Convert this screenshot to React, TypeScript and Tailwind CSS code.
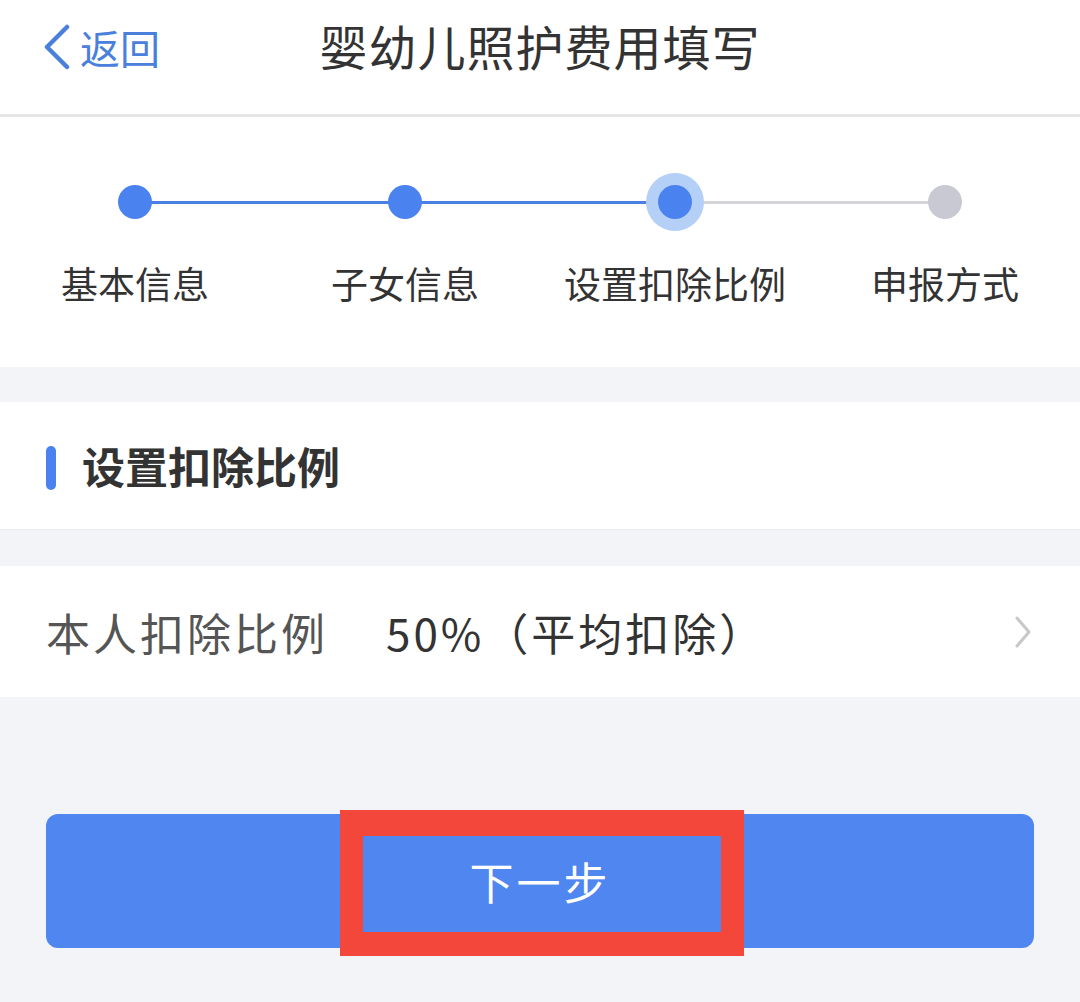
import React from 'react';

const steps = [
  { label: '基本信息', state: 'done' },
  { label: '子女信息', state: 'done' },
  { label: '设置扣除比例', state: 'active' },
  { label: '申报方式', state: 'todo' },
];

const App: React.FC = () => {
  return (
    <div
      className="w-[1080px] h-[1002px] bg-[#f3f4f8] overflow-hidden"
      style={{ fontFamily: '"Noto Sans CJK SC", "Noto Sans", sans-serif' }}
    >
      {/* Nav bar */}
      <div className="relative h-[117px] bg-white flex items-center justify-center pb-[20px] border-b-[3px] border-[#e6e6e8]">
        <div className="absolute left-[42px] top-0 bottom-[20px] flex items-center gap-[8px] text-[#4a80dc]">
          <svg width="30" height="46" viewBox="0 0 30 46" fill="none">
            <path d="M25 3 L5 23 L25 43" stroke="#4a80dc" strokeWidth="4.5" strokeLinecap="round" strokeLinejoin="round" />
          </svg>
          <span className="text-[40px] leading-none">返回</span>
        </div>
        <h1 className="text-[48px] leading-none text-[#333] tracking-[1px] pb-[4px]">婴幼儿照护费用填写</h1>
      </div>

      {/* Steps */}
      <div className="bg-white h-[250px] pt-[56px]">
        <div className="grid grid-cols-4">
          {steps.map((s, i) => (
            <div key={s.label} className="flex flex-col items-center">
              <div className="relative w-full h-[58px] flex items-center justify-center">
                {i > 0 && (
                  <div
                    className={`absolute left-0 right-1/2 top-[28px] h-[3px] ${
                      s.state === 'todo' ? 'bg-[#d3d3da]' : 'bg-[#4a80e4]'
                    }`}
                  />
                )}
                {i < steps.length - 1 && (
                  <div
                    className={`absolute left-1/2 right-0 top-[28px] h-[3px] ${
                      steps[i + 1].state === 'todo' ? 'bg-[#d3d3da]' : 'bg-[#4a80e4]'
                    }`}
                  />
                )}
                {s.state === 'active' ? (
                  <div className="relative w-[58px] h-[58px] rounded-full bg-[#b5d0f7] flex items-center justify-center">
                    <div className="w-[34px] h-[34px] rounded-full bg-[#4a83ef]" />
                  </div>
                ) : (
                  <div
                    className={`relative w-[34px] h-[34px] rounded-full ${
                      s.state === 'done' ? 'bg-[#4a83ef]' : 'bg-[#c9c9d3]'
                    }`}
                  />
                )}
              </div>
              <div className="mt-[34px] text-[37px] leading-none text-[#333]">{s.label}</div>
            </div>
          ))}
        </div>
      </div>

      {/* Section header */}
      <div className="mt-[35px] bg-white h-[128px] flex items-center pl-[46px] pt-[4px] border-b border-[#ececf0]">
        <div className="w-[10px] h-[44px] rounded-full bg-[#4a83ef] mr-[26px]" />
        <span className="text-[43px] font-bold leading-none text-[#333] pb-[4px]">设置扣除比例</span>
      </div>

      {/* Row */}
      <div className="mt-[36px] bg-white h-[131px] flex items-center pl-[46px] pr-[48px]">
        <span className="text-[44px] leading-none text-[#555] tracking-[3px]">本人扣除比例</span>
        <span className="ml-[58px] text-[44px] leading-none text-[#333] tracking-[3px]">50%（平均扣除）</span>
        <svg className="ml-auto" width="18" height="34" viewBox="0 0 18 34" fill="none">
          <path d="M3 3 L15 17 L3 31" stroke="#c8c8cc" strokeWidth="3" strokeLinecap="round" strokeLinejoin="round" />
        </svg>
      </div>

      {/* Button */}
      <div className="relative mt-[117px] mx-[46px]">
        <button className="w-full h-[134px] rounded-[12px] bg-[#4f86f0] text-white text-[44px] tracking-[3px] leading-none flex items-center justify-center">
          下一步
        </button>
        <div className="absolute left-[294px] top-[-4px] w-[404px] h-[146px] border-x-[23px] border-t-[26px] border-b-[24px] border-[#f2473a]" />
      </div>
    </div>
  );
};

export default App;
